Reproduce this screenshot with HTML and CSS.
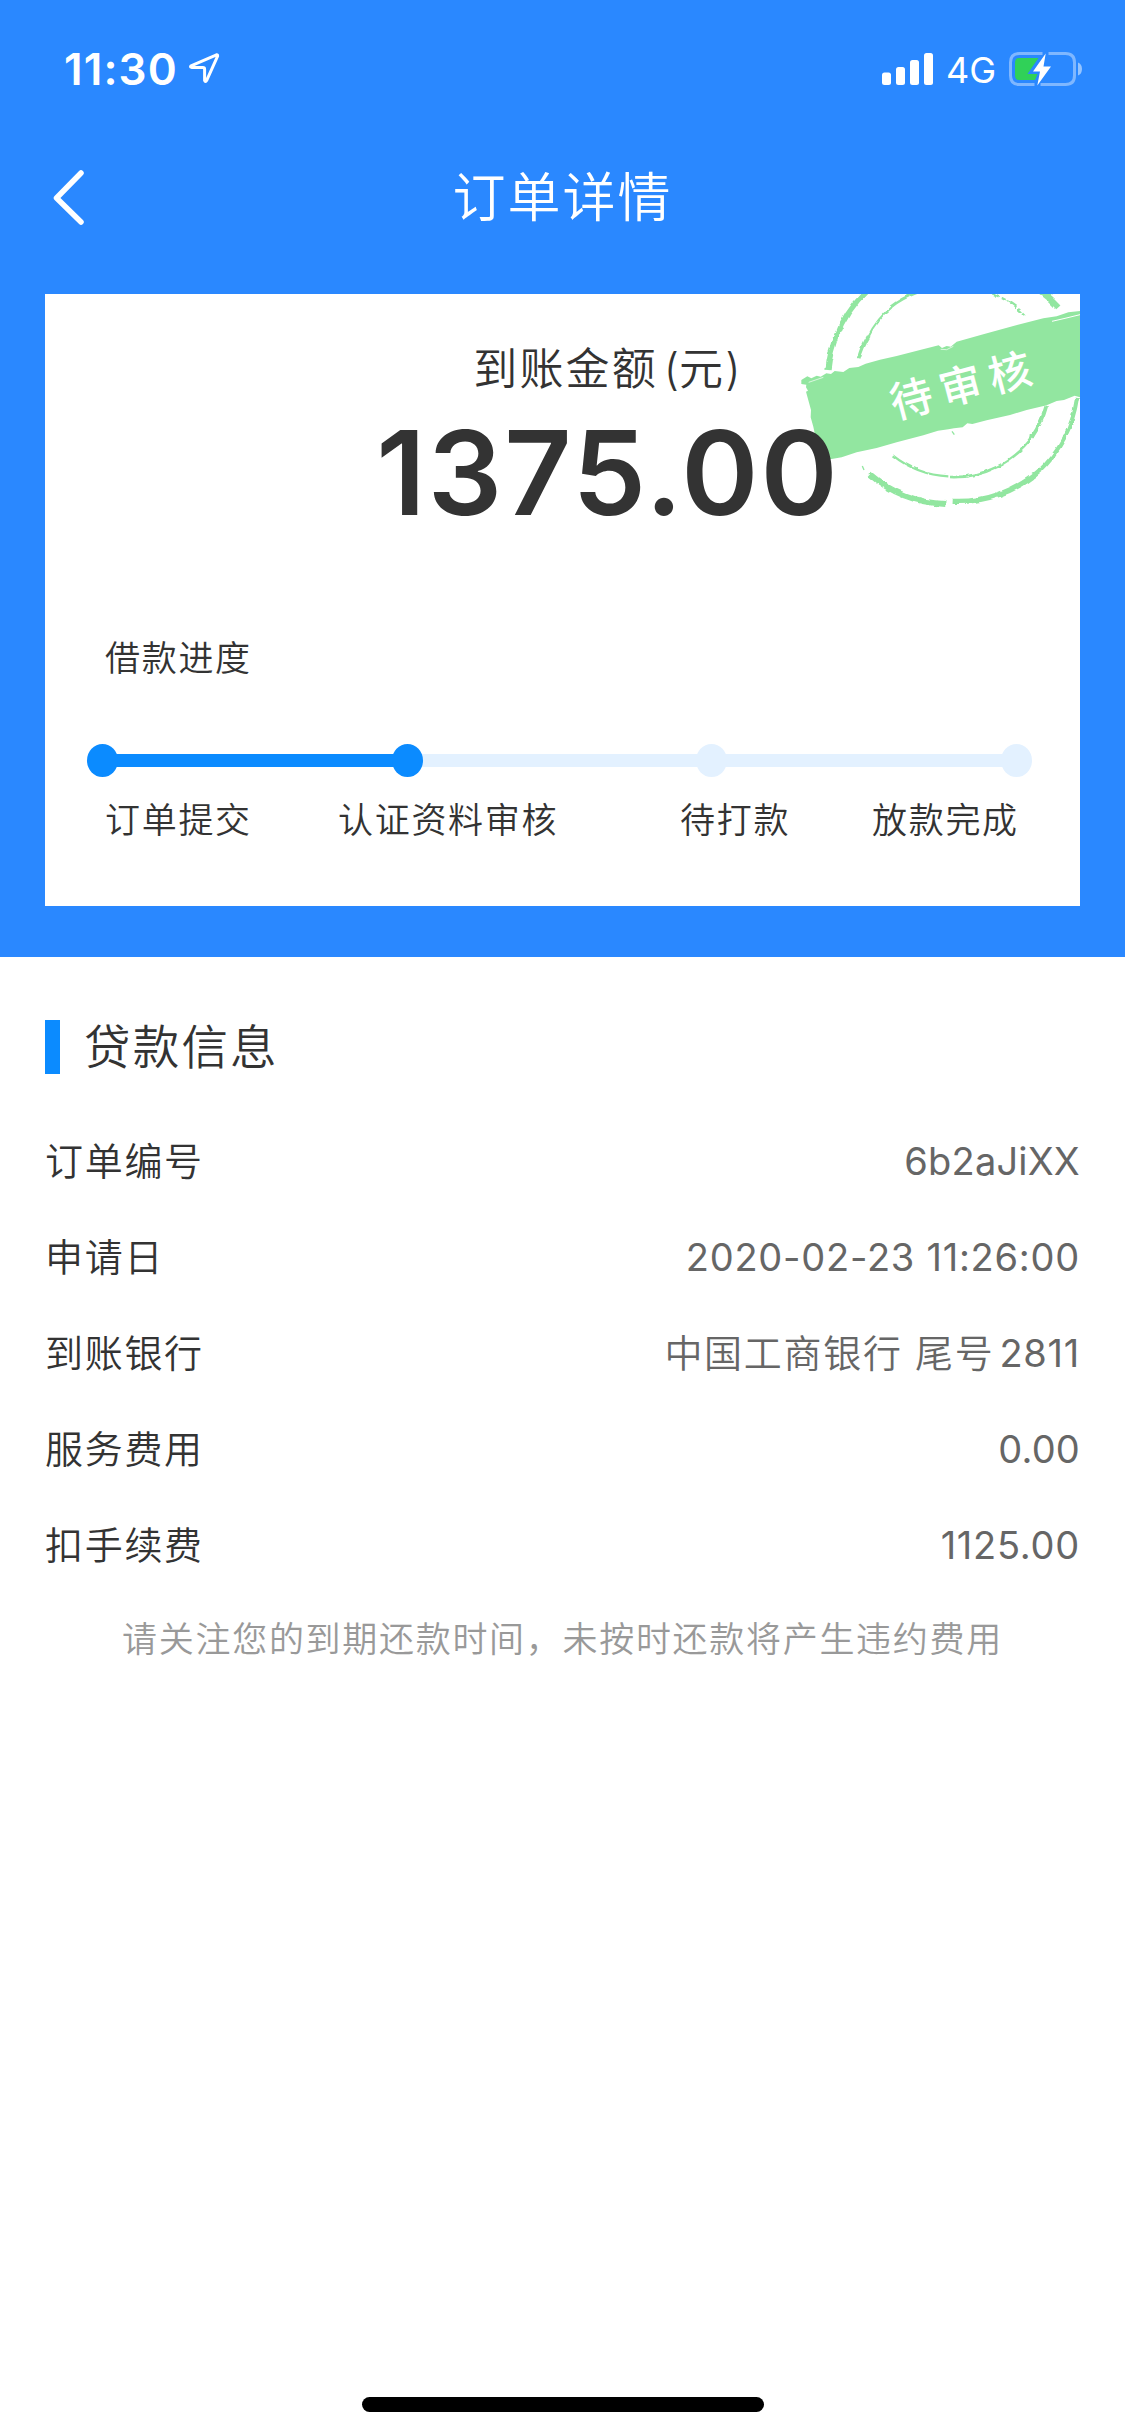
FILE: index.html
```html
<!DOCTYPE html>
<html lang="zh-CN">
<head>
<meta charset="utf-8">
<title>订单详情</title>
<link rel="stylesheet" href="styles.css">
</head>
<body>
<div class="page">
  <header class="hero">
    <div class="status">
      <span class="clock">11:30</span>
      <svg class="locate" width="32" height="32" viewBox="0 0 32 32"><path d="M28.500 2.800 L3 13.800 Q1.800 15 3.500 15.400 H14.800 Q16.600 15.400 16.600 17.200 V28.500 Q17.400 30.600 18.700 28.300 L29.600 4.200 Q29.800 2.500 28.500 2.800Z" fill="none" stroke="#fff" stroke-width="3" stroke-linejoin="round"/></svg>
      <svg class="signal" width="52" height="34" viewBox="0 0 52 34" fill="#fff"><rect y="20.500" width="9" height="12.500" rx="2.500"/><rect x="14" y="15" width="9" height="18" rx="2.500"/><rect x="28" y="8" width="9" height="25" rx="2.500"/><rect x="42" y="1" width="9" height="32" rx="2.500"/></svg>
      <span class="network">4G</span>
      <svg class="battery" width="75" height="36" viewBox="0 0 75 36">
        <path d="M34.500 2.500 H11.500 Q2.500 2.500 2.500 11.500 V24.500 Q2.500 33.500 11.500 33.500 H26.500 M40.500 2.500 H57.500 Q66.500 2.500 66.500 11.500 V24.500 Q66.500 33.500 57.500 33.500 H32.500" fill="none" stroke="#fff" stroke-opacity=".4" stroke-width="3"/>
        <path d="M70 11.500 Q74 13 74 18 Q74 23 70 24.500Z" fill="#fff" fill-opacity=".5"/>
        <path d="M30.500 7 H11 Q7 7 7 12 V24 Q7 29 11 29 H27 L29.500 23 H19.500Z" fill="#30d158"/>
        <path d="M37.700 2.500 L25 20.600 H32 L29.300 34.500 L43 15.600 H35.500Z" fill="#fff"/>
      </svg>
    </div>
    <nav class="nav">
      <svg class="back" width="36" height="60" viewBox="0 0 36 60"><path d="M31 5 L6.500 30 L31 54" fill="none" stroke="#fff" stroke-width="5.500" stroke-linecap="round" stroke-linejoin="round"/></svg>
      <h1 class="title">订单详情</h1>
    </nav>
    <section class="card">
      <svg class="stamp" width="300" height="236" viewBox="0 72 900 708">
        <defs>
          <filter id="rough" x="-5%" y="-5%" width="110%" height="110%">
            <feTurbulence type="fractalNoise" baseFrequency=".035" numOctaves="3" seed="4"/>
            <feDisplacementMap in="SourceGraphic" scale="11" xChannelSelector="R" yChannelSelector="G"/>
          </filter>
        </defs>
        <g filter="url(#rough)" fill="none" stroke="#92e6a0">
          <path d="M144 300 A372 372 0 0 1 172 190" stroke-width="16"/>
          <path d="M168 204 A374 374 0 0 1 265 58" stroke-width="15"/>
          <path d="M765 52 A374 374 0 0 1 835 112" stroke-width="17"/>
          <path d="M891 384 A376 376 0 0 1 775 605" stroke-width="12"/>
          <path d="M782 600 A374 374 0 0 1 518 694" stroke-width="16"/>
          <path d="M496 702 A372 372 0 0 1 268 612" stroke-width="18"/>
          <path d="M252 600 L247 588" stroke-width="4"/>
          <path d="M236 268 A286 286 0 0 1 268 195" stroke-width="11"/>
          <path d="M262 204 A286 286 0 0 1 340 105" stroke-width="6"/>
          <path d="M332 111 A286 286 0 0 1 410 68" stroke-width="9"/>
          <path d="M625 66 A286 286 0 0 1 737 138" stroke-width="7" stroke-dasharray="34 7 16 5"/>
          <path d="M799 408 A292 292 0 0 1 755 502" stroke-width="11"/>
          <path d="M760 497 A292 292 0 0 1 510 621" stroke-width="8"/>
          <path d="M505 619 A290 290 0 0 1 338 556" stroke-width="7"/>
        </g>
        <path d="M64 330 L82 319 94 325 110 317 122 320 139 310 153 312 164 303 190 306 208 294 235 291 257 281 300 269 350 258 420 240 476 226 486 234 500 228 512 230 530 215 610 193 700 168 790 145 830 139 865 127 900 123 V382 L884 377 852 390 830 393 800 406 740 420 690 435 620 451 577 462 562 460 548 472 522 475 505 478 474 482 430 496 350 517 290 534 230 547 185 562 155 567 120 567 100 470 92 442 93 420 78 365 84 362 78 352 79 344 64 342Z" fill="#92e6a0"/>
        <path d="M816 154 L855 145 900 134" fill="none" stroke="#fff" stroke-width="3"/>
        <path d="M86 337 L130 322 M482 238 L500 239 520 229" fill="none" stroke="#fff" stroke-width="2"/>
        <path d="M516 484 L523 494 M536 224 L548 221" stroke="#92e6a0" stroke-width="4"/>
        <text class="stamp-text" transform="translate(344 448) rotate(-14.800)" x="0" y="0">待审核</text>
      </svg>
      <div class="amount">
        <p class="amount-label">到账金额<span class="paren">(</span>元<span>)</span></p>
        <p class="amount-value">1375.00</p>
      </div>
      <h2 class="progress-title">借款进度</h2>
      <div class="track">
        <i class="dot done"></i><i class="bar done"></i><i class="dot done"></i><i class="bar"></i><i class="dot"></i><i class="bar"></i><i class="dot"></i>
      </div>
      <div class="steps"><span>订单提交</span><span>认证资料审核</span><span>待打款</span><span>放款完成</span></div>
    </section>
  </header>
  <main class="info">
    <h2 class="info-title">贷款信息</h2>
    <dl class="rows">
      <div class="row"><dt>订单编号</dt><dd class="code">6b2aJiXX</dd></div>
      <div class="row"><dt>申请日</dt><dd>2020-02-23 11:26:00</dd></div>
      <div class="row"><dt>到账银行</dt><dd><span class="han">中国工商银行 尾号</span>2811</dd></div>
      <div class="row"><dt>服务费用</dt><dd class="code">0.00</dd></div>
      <div class="row"><dt>扣手续费</dt><dd>1125.00</dd></div>
    </dl>
    <p class="note">请关注您的到期还款时间，未按时还款将产生违约费用</p>
  </main>
  <footer class="home"><i class="home-bar"></i></footer>
</div>
</body>
</html>
```
FILE: styles.css
```css
* { box-sizing: border-box; margin: 0; padding: 0; }
body { background: #fff; color: #333; font-family: Inter, "Noto Sans CJK SC", sans-serif; }
.page { width: 1125px; height: 2436px; display: flex; flex-direction: column; overflow: hidden; }
svg { display: block; flex: none; }
h1, h2, dt, .steps, .note, .amount-label, .han { font-weight: 350; }

.hero { background: #2a88ff; height: 957px; padding: 0 45px; flex: none; }
.status { height: 132px; padding: 51px 0 0 19px; display: flex; align-items: flex-start; color: #fff; }
.clock { flex: none; width: 123px; font-size: 44px; font-weight: 600; letter-spacing: 1.1px; line-height: 36px; }
.locate { margin: 1px 0 0 1px; }
.signal { margin: 1px 0 0 662px; }
.network { flex: none; width: 62px; margin-left: 12px; font-size: 36px; line-height: 38px; }

.nav { height: 132px; display: grid; grid-template-columns: 60px 1fr 60px; align-items: center; color: #fff; }
.back { margin-left: 5px; }
.title { text-align: center; font-size: 53px; letter-spacing: 2px; line-height: 80px; }

.card { position: relative; height: 612px; margin-top: 30px; background: #fff; overflow: hidden; }
.stamp { position: absolute; top: 0; right: 0; }
.stamp-text { font-family: "Noto Sans CJK SC", sans-serif; font-weight: 500; font-size: 128px; letter-spacing: 25px; fill: #fff; }
.amount { position: relative; padding: 42px 0 0 91px; text-align: center; }
.amount-label { font-size: 44px; letter-spacing: 2.1px; line-height: 66px; }
.paren { padding-left: 6px; letter-spacing: 0; }
.amount-value { padding-top: 1px; font-size: 117px; font-weight: 600; letter-spacing: 2px; line-height: 140px; }
.progress-title { margin: 89px 0 0 60px; font-size: 35px; letter-spacing: 1.7px; line-height: 52px; }
.track { display: flex; align-items: center; margin: 60px 48px 0 42px; height: 33px; }
.dot { flex: none; width: 31px; height: 33px; border-radius: 50%; background: #e3f1ff; z-index: 1; }
.bar { flex: 1; height: 13px; margin: 0 -4px; background: #e3f1ff; }
.track .done { background: #0b8bff; }
.steps { display: grid; grid-template-columns: 233px 342px 192px auto; margin: 17px 0 0 60px; font-size: 35px; letter-spacing: 1.7px; line-height: 52px; }

.info { flex: 1; padding: 63px 45px 0; }
.info-title { height: 54px; padding-left: 24px; border-left: 15px solid #0b8bff; font-size: 46.500px; letter-spacing: 2.2px; line-height: 55px; }
.rows { margin-top: 39px; }
.row { display: flex; justify-content: space-between; height: 96px; font-size: 38px; line-height: 96px; }
dt { letter-spacing: 1.7px; }
dd { color: #666; letter-spacing: .75px; }
.code { letter-spacing: .2px; }
.han { letter-spacing: 1.7px; padding-right: 5px; }
.note { text-align: center; color: #999; font-size: 35px; letter-spacing: 1.7px; line-height: 52px; margin-top: 20px; }

.home { height: 39px; display: flex; justify-content: center; flex: none; }
.home-bar { width: 402px; height: 15px; border-radius: 8px; background: #000; }
```
